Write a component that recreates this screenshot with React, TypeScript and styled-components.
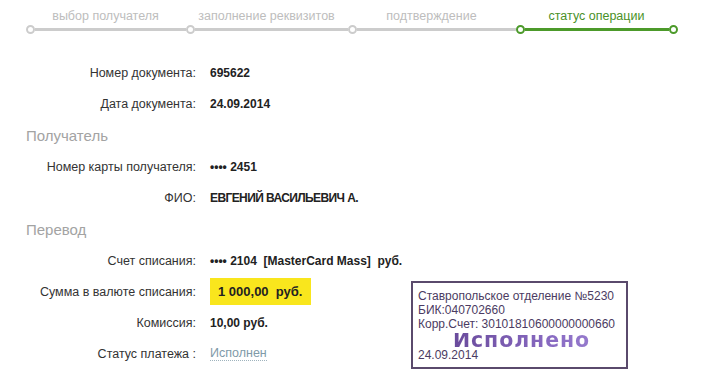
import React from 'react'
import styled, { createGlobalStyle } from 'styled-components'

const GlobalStyle = createGlobalStyle`
  body {
    margin: 0;
    background: #ffffff;
    font-family: "Liberation Sans", Arial, sans-serif;
  }
`

const Page = styled.main`
  width: 705px;
  height: 383px;
  padding-top: 8px;
  box-sizing: border-box;
  overflow: hidden;
  background: #fff;
`

const Steps = styled.ol`
  list-style: none;
  margin: 0 0 0 25.5px;
  padding: 0;
  display: grid;
  grid-template-columns: 160px 162px 168px 162px;
`

const Step = styled.li`
  display: flex;
  flex-direction: column;
`

const StepLabel = styled.span<{ $active?: boolean }>`
  height: 17px;
  line-height: 17px;
  font-size: 12.5px;
  text-align: center;
  color: ${p => (p.$active ? '#4a9128' : '#bdbdbd')};
  white-space: nowrap;
`

const Track = styled.div`
  height: 9px;
  display: flex;
  align-items: center;
`

const Dot = styled.span<{ $active?: boolean }>`
  width: 9px;
  height: 9px;
  box-sizing: border-box;
  border-radius: 50%;
  background: #fff;
  border: 2px solid ${p => (p.$active ? '#4c9a2a' : '#cccccc')};
  flex: none;
`

const Line = styled.span<{ $active?: boolean }>`
  flex: 1;
  height: 3px;
  background: ${p => (p.$active ? '#4c9a2a' : '#cccccc')};
`

const Details = styled.section`
  margin-top: 23px;
  display: flex;
  align-items: flex-end;
`

const List = styled.div`
  width: 411px;
  display: flex;
  flex-direction: column;
`

const Field = styled.div`
  height: 31px;
  display: grid;
  grid-template-columns: 196px auto;
  column-gap: 14px;
  align-items: center;
  font-size: 12.5px;
  white-space: nowrap;
`

const Label = styled.span`
  text-align: right;
  color: #333333;
`

const Value = styled.span<{ $tight?: boolean }>`
  font-size: 12px;
  font-weight: bold;
  color: #222222;
  white-space: pre;
  letter-spacing: ${p => (p.$tight ? '-0.6px' : '0')};
`

const Highlight = styled.span`
  justify-self: start;
  height: 27px;
  padding: 0 9px 0 8px;
  display: inline-flex;
  align-items: center;
  background: #f9e61d;
  font-size: 13px;
  font-weight: bold;
  color: #222222;
  white-space: pre;
`

const StatusLink = styled.a`
  justify-self: start;
  color: #7f9aa8;
  text-decoration: none;
  border-bottom: 1px dotted #9fb3bd;
  line-height: 14px;
`

const SectionTitle = styled.h2`
  margin: 0;
  height: 32px;
  padding-left: 26px;
  display: flex;
  align-items: center;
  font-size: 15px;
  font-weight: normal;
  color: #a3a3a3;
`

const Stamp = styled.div`
  width: 217px;
  height: 88px;
  box-sizing: border-box;
  border: 2px solid #5a4a6c;
  padding: 6px 0 0 5px;
  display: flex;
  flex-direction: column;
  font-size: 12px;
  line-height: 14px;
  color: #4b3b62;
  white-space: nowrap;
`

const StampTitle = styled.span`
  margin: 2px 0 0 35px;
  height: 15px;
  line-height: 15px;
  font-family: "DejaVu Sans", Verdana, sans-serif;
  font-size: 20.5px;
  font-weight: bold;
  letter-spacing: 0.9px;
  background: linear-gradient(90deg, #6a4b9c 0%, #8a6cc4 60%, #a28ad6 100%);
  -webkit-background-clip: text;
  background-clip: text;
  color: transparent;
`

const steps = [
  { label: 'выбор получателя', active: false },
  { label: 'заполнение реквизитов', active: false },
  { label: 'подтверждение', active: false },
  { label: 'статус операции', active: true },
]

const App = () => {
  return (
    <Page>
      <GlobalStyle />
      <Steps>
        {steps.map((s, i) => (
          <Step key={s.label}>
            <StepLabel $active={s.active}>{s.label}</StepLabel>
            <Track>
              <Dot $active={s.active} />
              <Line $active={s.active} />
              {i === steps.length - 1 ? <Dot $active={s.active} /> : null}
            </Track>
          </Step>
        ))}
      </Steps>

      <Details>
        <List>
          <Field>
            <Label>Номер документа:</Label>
            <Value>695622</Value>
          </Field>
          <Field>
            <Label>Дата документа:</Label>
            <Value>24.09.2014</Value>
          </Field>

          <SectionTitle>Получатель</SectionTitle>
          <Field>
            <Label>Номер карты получателя:</Label>
            <Value>•••• 2451</Value>
          </Field>
          <Field>
            <Label>ФИО:</Label>
            <Value $tight>ЕВГЕНИЙ ВАСИЛЬЕВИЧ А.</Value>
          </Field>

          <SectionTitle>Перевод</SectionTitle>
          <Field>
            <Label>Счет списания:</Label>
            <Value>{'•••• 2104  [MasterCard Mass]  руб.'}</Value>
          </Field>
          <Field>
            <Label>Сумма в валюте списания:</Label>
            <Highlight>{'1 000,00  руб.'}</Highlight>
          </Field>
          <Field>
            <Label>Комиссия:</Label>
            <Value>10,00 руб.</Value>
          </Field>
          <Field>
            <Label>Статус платежа :</Label>
            <StatusLink href="#">Исполнен</StatusLink>
          </Field>
        </List>

        <Stamp>
          <span>Ставропольское отделение №5230</span>
          <span>БИК:040702660</span>
          <span>Корр.Счет: 30101810600000000660</span>
          <StampTitle>Исполнено</StampTitle>
          <span>24.09.2014</span>
        </Stamp>
      </Details>
    </Page>
  )
}

export default App
